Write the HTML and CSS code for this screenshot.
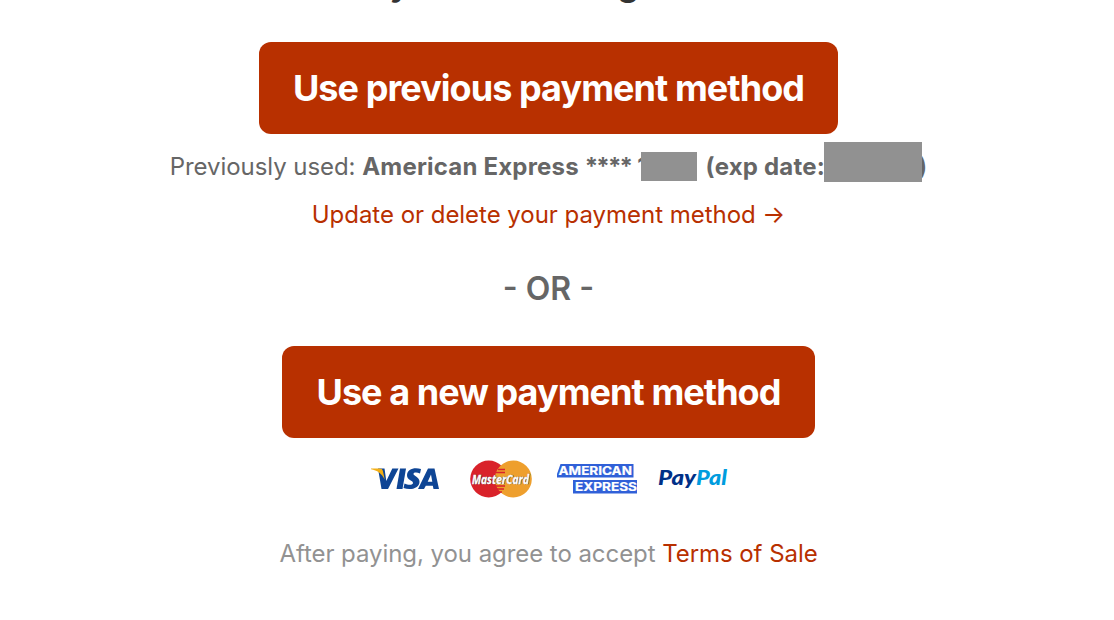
FILE: index.html
```
<!DOCTYPE html>
<html lang="en">
<head>
  <meta charset="UTF-8">
  <meta name="viewport" content="width=device-width, initial-scale=1.0">
  <title>Payment method</title>
  <link rel="stylesheet" href="styles.css">
</head>
<body>

  <main class="payment">
    <div class="heading"><span>y</span><span>g</span></div>

    <a class="button" href="#">Use previous payment method</a>
    <p class="previous">Previously used: <strong>American Express <span class="stars">****</span> <span class="card-number">1<span class="mask"></span></span> (exp date:<span class="mask mask-date"></span>)</strong></p>
    <p class="update"><a href="#">Update or delete your payment method →</a></p>

    <p class="or">- OR -</p>

    <a class="button button-new" href="#">Use a new payment method</a>

    <div class="cards">
      <svg class="visa" width="68" height="24" viewBox="0 0 68 24" role="img" aria-label="Visa">
        <g fill="#0e4595">
          <path d="M7 1.500h6.500l1.800 12.500 6-12.500H27.500L17 22H10.500z"/>
          <path d="M29 1.500h6L31.500 22h-6z"/>
          <path d="M50 2l-1 4.500c-3-1.300-6.500-1.200-6.500.5 0 2 6 2.800 6 7.800 0 7.200-10 8.700-16 6.200l1-4.600c3.500 1.700 8.500 1.800 8.500-.5 0-2.400-6-2.500-6-7.600C36 1.500 44 0 50 2z"/>
          <path fill-rule="evenodd" d="M57 1.500h6.500L68 22h-5.500l-.7-3.300h-7L53 22h-6zM60 7.500l-3.300 7.200h4.600z"/>
        </g>
        <path fill="#f2ae14" d="M0 1.500h8.500c2 0 3 .8 3.400 2.500l1.800 8.500C11 6.500 6 3.200 0 2.200z"/>
      </svg>
      <svg class="mastercard" width="62" height="38" viewBox="0 0 62 38" role="img" aria-label="MasterCard">
        <circle cx="18.700" cy="19" r="18.500" fill="#d9222a"/>
        <circle cx="43.300" cy="19" r="18.500" fill="#ee9f2d"/>
        <path stroke="#d9222a" stroke-width="1.500" d="M28 9.500h7M26 12.500h9M26 26h9M27 29h7M29 32h3"/>
        <text class="mc-shadow" x="2.500" y="24" textLength="57" lengthAdjust="spacingAndGlyphs">MasterCard</text>
        <text class="mc-text" x="2" y="23.500" textLength="57" lengthAdjust="spacingAndGlyphs">MasterCard</text>
      </svg>
      <svg class="amex" width="80" height="30" viewBox="0 0 80 30" role="img" aria-label="American Express">
        <path fill="#3060d8" d="M3.500 0h73v13.500H0V10zM16 16h64v13.500H16z"/>
        <text class="amex-text" x="1.500" y="11" textLength="73.500" lengthAdjust="spacingAndGlyphs">AMERICAN</text>
        <text class="amex-text" x="18" y="27" textLength="62" lengthAdjust="spacingAndGlyphs">EXPRESS</text>
      </svg>
      <svg class="paypal" width="71" height="24" viewBox="0 0 71 24" role="img" aria-label="PayPal">
        <text class="paypal-text" x="0" y="18" fill="#003087" textLength="38" lengthAdjust="spacingAndGlyphs">Pay</text>
        <text class="paypal-text" x="38" y="18" fill="#009cde" textLength="31" lengthAdjust="spacingAndGlyphs">Pal</text>
      </svg>
    </div>

    <p class="terms">After paying, you agree to accept <a href="#">Terms of Sale</a></p>
  </main>

</body>
</html>
```
FILE: styles.css
```
body { margin: 0; background: #fff; color: #666; font-family: Inter, "Liberation Sans", sans-serif; overflow: hidden; }
a { color: #b83000; text-decoration: none; }
p { margin: 0; white-space: nowrap; }
.payment { width: 1097px; height: 620px; display: flex; flex-direction: column; align-items: center; }
.heading { width: 250px; height: 42px; display: flex; justify-content: space-between; color: #333; font-size: 36px; font-weight: 600; line-height: 42px; margin-top: -39px; margin-bottom: 39px; margin-right: 68px; }
.button { box-sizing: border-box; width: 579px; height: 92px; border-radius: 12px; background: #b83000; color: #fff; font-size: 36px; font-weight: 650; line-height: 92px; text-align: center; white-space: nowrap; letter-spacing: -0.94px; }
.button-new { width: 533px; }
.previous { height: 40px; margin-top: 13px; font-size: 24px; line-height: 40px; letter-spacing: -0.06px; }
.previous strong { font-weight: 700; letter-spacing: 0.2px; }
.previous .stars { letter-spacing: -1.8px; }
.card-number { display: inline-block; margin-right: 3px; }
.mask { display: inline-block; width: 56px; height: 29px; margin: -10px 0 -10px -7px; background: #919191; vertical-align: 4px; position: relative; }
.mask-date { width: 98px; height: 40px; margin: -10px -4px -10px -1px; vertical-align: 3px; }
.update { margin-top: 8px; font-size: 24px; line-height: 40px; letter-spacing: -0.03px; }
.or { margin: 34px 0 37px; font-size: 32px; font-weight: 600; line-height: 40px; }
.cards { display: flex; align-items: center; height: 40px; margin: 21px 0 35px 3px; }
.visa { margin-right: 31px; }
.mastercard { margin-right: 25px; }
.amex { margin-right: 21px; }
.mc-text, .mc-shadow { font: italic 700 13px "Open Sans", sans-serif; fill: #fff; stroke: #fff; stroke-width: 0.3px; }
.mc-shadow { fill: #222; stroke: #222; }
.amex-text { font: 700 12px Inter, sans-serif; fill: #fff; stroke: #fff; stroke-width: 0.2px; }
.paypal-text { font: italic 900 20px Lato, sans-serif; }
.terms { color: #929292; font-size: 24px; line-height: 40px; letter-spacing: -0.06px; }
```
